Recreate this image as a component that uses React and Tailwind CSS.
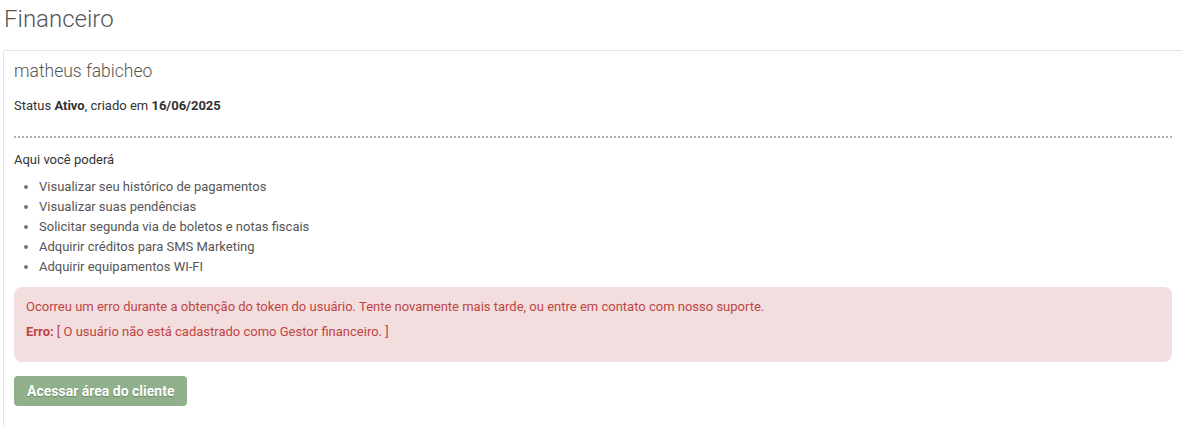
import React from 'react';

const features = [
  'Visualizar seu histórico de pagamentos',
  'Visualizar suas pendências',
  'Solicitar segunda via de boletos e notas fiscais',
  'Adquirir créditos para SMS Marketing',
  'Adquirir equipamentos WI-FI',
];

const App = () => {
  return (
    <div className="min-h-screen bg-white font-['Roboto',sans-serif] text-[#333]">
      {/* Page title */}
      <h1 className="pl-[4px] pt-[3px] text-[24px] leading-[32px] font-light text-[#555]">
        Financeiro
      </h1>

      {/* Account card */}
      <div className="mt-[15px] ml-[3px] border-l border-t border-[#e3e3e3] pl-[10px] pr-[10px] pb-[20px]">
        <h2 className="pt-[7px] text-[17.5px] leading-[26px] font-light text-[#555]">
          matheus fabicheo
        </h2>

        <p className="mt-[13px] text-[13px] leading-[18px] text-[#333]">
          Status <strong className="font-bold">Ativo</strong>, criado em{' '}
          <strong className="font-bold">16/06/2025</strong>
        </p>

        <div className="mt-[21px] border-t-2 border-dotted border-[#b0b0b0]" />

        <p className="mt-[13px] text-[13px] leading-[18px] text-[#333]">Aqui você poderá</p>

        <ul className="mt-[8px] list-disc pl-[25px] text-[13px] leading-[20px] text-[#555] marker:text-[#777]">
          {features.map((item) => (
            <li key={item}>{item}</li>
          ))}
        </ul>

        {/* Error alert */}
        <div className="mt-[10px] rounded-[8px] bg-[#f2dede] px-[12px] pt-[11px] pb-[21px] text-[13px] leading-[18px] text-[#bf4545]">
          <p>
            Ocorreu um erro durante a obtenção do token do usuário. Tente novamente mais tarde, ou entre em contato com nosso suporte.
          </p>
          <p className="mt-[7px]">
            <strong className="font-bold">Erro:</strong> [ O usuário não está cadastrado como Gestor financeiro. ]
          </p>
        </div>

        <button
          type="button"
          className="mt-[14px] h-[30px] rounded-[4px] bg-[#8fb08b] px-[13px] text-[14px] font-bold text-white [text-shadow:0_1px_1px_rgba(0,0,0,0.25)]"
        >
          Acessar área do cliente
        </button>
      </div>
    </div>
  );
};

export default App;
